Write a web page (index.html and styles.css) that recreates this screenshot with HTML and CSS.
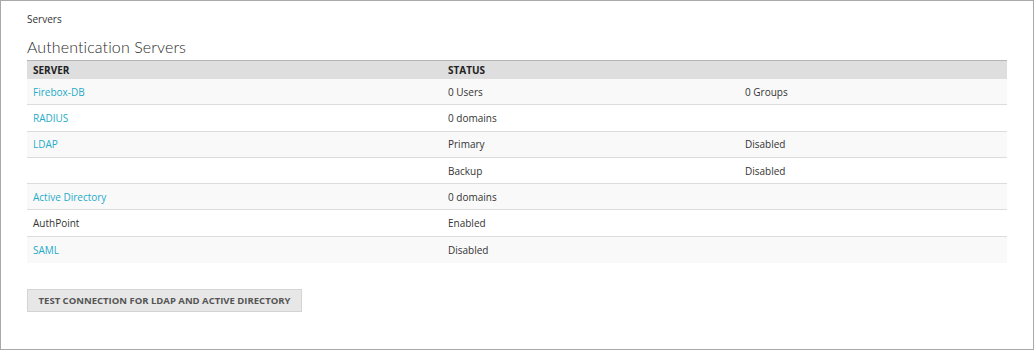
FILE: index.html
```html
<!DOCTYPE html>
<html>
<head>
<meta charset="utf-8">
<link rel="stylesheet" href="styles.css">
</head>
<body>
<div class="frame">
  <div class="crumb">Servers</div>
  <h1 class="title">Authentication Servers</h1>
  <table class="servers">
    <thead>
      <tr><th class="c1">SERVER</th><th class="c2">STATUS</th><th class="c3"></th></tr>
    </thead>
    <tbody>
      <tr><td><a href="#">Firebox-DB</a></td><td>0 Users</td><td>0 Groups</td></tr>
      <tr><td><a href="#">RADIUS</a></td><td>0 domains</td><td></td></tr>
      <tr><td><a href="#">LDAP</a></td><td>Primary</td><td>Disabled</td></tr>
      <tr><td></td><td>Backup</td><td>Disabled</td></tr>
      <tr><td><a href="#">Active Directory</a></td><td>0 domains</td><td></td></tr>
      <tr><td>AuthPoint</td><td>Enabled</td><td></td></tr>
      <tr><td><a href="#">SAML</a></td><td>Disabled</td><td></td></tr>
    </tbody>
  </table>
  <button class="btn">TEST CONNECTION FOR LDAP AND ACTIVE DIRECTORY</button>
</div>
</body>
</html>
```

FILE: styles.css
```css
html, body { margin: 0; padding: 0; background: #fff; }
body { font-family: "Open Sans", "Liberation Sans", sans-serif; color: #333; }
.frame {
  box-sizing: border-box;
  width: 1034px;
  height: 350px;
  border: 1px solid #a9a9a9;
  padding: 11px 26px 0 26px;
}
.crumb { font-size: 10px; line-height: 14px; color: #333; }
.title {
  margin: 11px 0 3px 0;
  font-family: "Lato", "Open Sans", sans-serif;
  font-weight: 300;
  font-size: 16px;
  line-height: 20px;
  color: #2b2b2b;
  letter-spacing: 0.1px;
}
.servers {
  width: 980px;
  border-collapse: collapse;
  font-size: 10px;
}
.servers th {
  background: #dedede;
  border-top: 1px solid #b5b5b5;
  text-align: left;
  font-weight: 700;
  font-size: 10px;
  color: #222;
  height: 18px;
  padding: 0 6px;
}
.c1 { width: 403px; }
.c2 { width: 285px; }
.servers td {
  height: 25.3px;
  padding: 0 6px;
  border-bottom: 1px solid #dcdcdc;
  color: #333;
}
.servers tbody tr:nth-child(odd) td { background: #f9f9f9; }
.servers tbody tr:last-child td { border-bottom: none; height: 26px; }
.servers a { color: #1fabc9; text-decoration: none; }
.btn {
  display: block;
  margin-top: 26px;
  height: 23px;
  width: 275px;
  background: #e7e7e7;
  border: 1px solid #d4d4d4;
  font-family: "Open Sans", sans-serif;
  font-weight: 700;
  font-size: 9.5px;
  color: #555;
  letter-spacing: 0;
  white-space: nowrap;
  text-align: center;
  padding: 0;
}
```
